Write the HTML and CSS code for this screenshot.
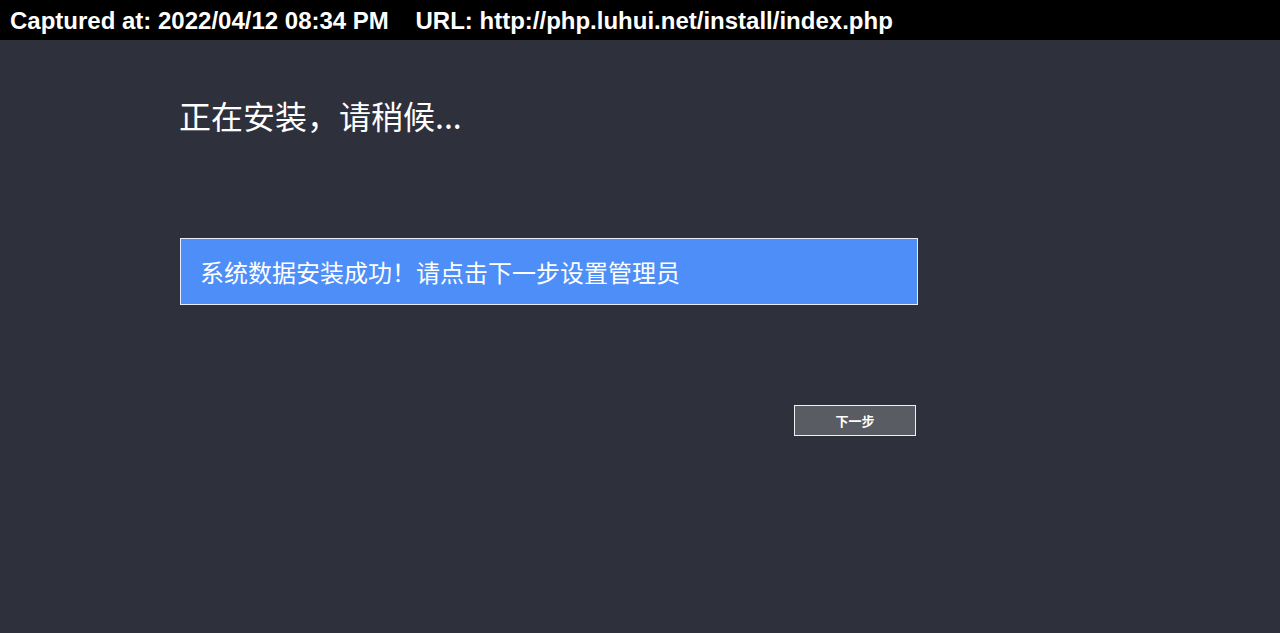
FILE: index.html
```html
<!DOCTYPE html>
<html lang="zh">
<head>
<meta charset="utf-8">
<title>Install</title>
<link rel="stylesheet" href="styles.css">
</head>
<body>
<div class="capbar">Captured at: 2022/04/12 08:34 PM&nbsp;&nbsp;&nbsp;&nbsp;URL: http://php.luhui.net/install/index.php</div>
<div class="main">
  <h1 class="title">正在安装，请稍候...</h1>
  <div class="msg">系统数据安装成功！请点击下一步设置管理员</div>
  <div class="actions"><button class="next">下一步</button></div>
</div>
</body>
</html>
```
FILE: styles.css
```css
html, body {
  margin: 0;
  padding: 0;
  background: #2e303b;
  height: 100%;
  overflow: hidden;
}
body {
  font-family: "Microsoft YaHei", "Noto Sans CJK SC", sans-serif;
  color: #fff;
}
.capbar {
  background: #000;
  height: 40px;
  line-height: 42px;
  padding-left: 10px;
  font-family: "Liberation Sans", Arial, sans-serif;
  font-weight: bold;
  font-size: 24px;
  color: #fff;
  white-space: nowrap;
}
.main {
  width: 738px;
  margin-left: 180px;
  padding-top: 55px;
}
.title {
  margin: 0 0 0 -1px;
  font-size: 32px;
  line-height: 40px;
  font-weight: normal;
}
.msg {
  margin-top: 103px;
  height: 65px;
  border: 1px solid #e8ecf5;
  background: #4d8ef8;
  box-sizing: content-box;
  padding-left: 19px;
  font-size: 24px;
  line-height: 65px;
}
.actions {
  margin-top: 100px;
  display: flex;
  justify-content: flex-end;
  padding-right: 2px;
}
.next {
  width: 122px;
  height: 31px;
  background: #5a5c64;
  border: 1px solid #f0f0f0;
  color: #fff;
  font-family: "Noto Sans CJK SC", sans-serif;
  font-size: 13px;
  font-weight: bold;
  padding: 0;
}
```
